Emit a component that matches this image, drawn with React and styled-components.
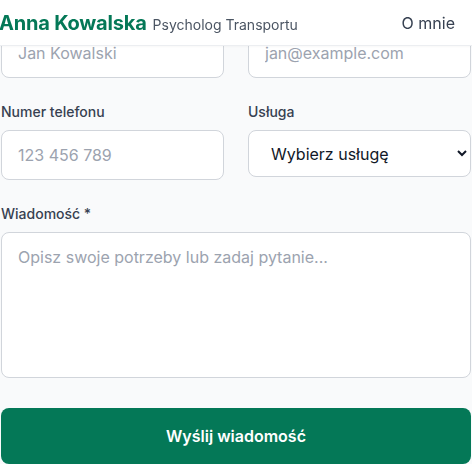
import React from 'react';
import styled, { createGlobalStyle } from 'styled-components';

const GlobalStyle = createGlobalStyle`
  body {
    margin: 0;
    background: #f9fafb;
    font-family: Inter, "Liberation Sans", sans-serif;
    overflow: hidden;
  }
  * { box-sizing: border-box; }
`;

const Header = styled.header`
  position: fixed;
  top: 0;
  left: 0;
  right: 0;
  height: 46px;
  z-index: 10;
  display: flex;
  align-items: center;
  justify-content: space-between;
  padding: 0 17px 0 0;
  background: #fff;
  border-bottom: 1px solid #eceef1;
  box-shadow: 0 1px 2px rgba(0, 0, 0, 0.03);
`;

const Brand = styled.div`
  display: flex;
  align-items: baseline;
  gap: 6px;
  margin-left: -1px;
`;

const Title = styled.span`
  font-size: 20px;
  font-weight: 700;
  letter-spacing: -0.2px;
  color: #047857;
`;

const Subtitle = styled.span`
  font-size: 14px;
  color: #4b5563;
`;

const NavLink = styled.a`
  font-size: 16px;
  color: #374151;
  text-decoration: none;
`;

const Form = styled.form`
  display: flex;
  flex-direction: column;
  gap: 24px;
  padding: 28px 1px 0;
`;

const Row = styled.div`
  display: grid;
  grid-template-columns: minmax(0, 1fr) minmax(0, 1fr);
  gap: 24px;
`;

const Field = styled.div`
  display: flex;
  flex-direction: column;
  min-width: 0;
`;

const Label = styled.label`
  font-size: 14px;
  line-height: 20px;
  font-weight: 500;
  color: #374151;
  margin-bottom: 8px;
`;

const Input = styled.input`
  width: 100%;
  height: 50px;
  padding: 0 16px;
  font-family: inherit;
  font-size: 16px;
  color: #111827;
  background: #fff;
  border: 1px solid #d1d5db;
  border-radius: 8px;
  outline: none;

  &::placeholder {
    color: #9ca3af;
  }
`;

const Select = styled.select`
  width: 100%;
  height: 47px;
  padding: 0 8px 0 18px;
  font-family: inherit;
  font-size: 16px;
  color: #111827;
  background: #fff;
  border: 1px solid #d1d5db;
  border-radius: 8px;
  outline: none;
`;

const TextArea = styled.textarea`
  display: block;
  width: 100%;
  height: 146px;
  padding: 12px 16px;
  font-family: inherit;
  font-size: 16px;
  line-height: 24px;
  color: #111827;
  background: #fff;
  border: 1px solid #d1d5db;
  border-radius: 8px;
  outline: none;
  resize: none;

  &::placeholder {
    color: #9ca3af;
  }
`;

const SubmitButton = styled.button`
  margin-top: 6px;
  height: 56px;
  border: none;
  border-radius: 8px;
  background: #047857;
  color: #fff;
  font-family: inherit;
  font-size: 16px;
  font-weight: 600;
  cursor: pointer;
`;

export default function App() {
  return (
    <>
      <GlobalStyle />
      <Header>
        <Brand>
          <Title>Anna Kowalska</Title>
          <Subtitle>Psycholog Transportu</Subtitle>
        </Brand>
        <NavLink href="#">O mnie</NavLink>
      </Header>

      <Form onSubmit={(e) => e.preventDefault()}>
        {/* the labels of this row are scrolled up under the header */}
        <Row>
          <Input aria-label="Imię i nazwisko" placeholder="Jan Kowalski" />
          <Input aria-label="Email" type="email" placeholder="jan@example.com" />
        </Row>

        <Row>
          <Field>
            <Label>Numer telefonu</Label>
            <Input placeholder="123 456 789" />
          </Field>
          <Field>
            <Label>Usługa</Label>
            <Select defaultValue="">
              <option value="">Wybierz usługę</option>
              <option value="kierowcy">Badania kierowców</option>
              <option value="operatorzy">Badania operatorów</option>
            </Select>
          </Field>
        </Row>

        <Field>
          <Label>Wiadomość *</Label>
          <TextArea placeholder="Opisz swoje potrzeby lub zadaj pytanie..." />
        </Field>

        <SubmitButton type="submit">Wyślij wiadomość</SubmitButton>
      </Form>
    </>
  );
}
